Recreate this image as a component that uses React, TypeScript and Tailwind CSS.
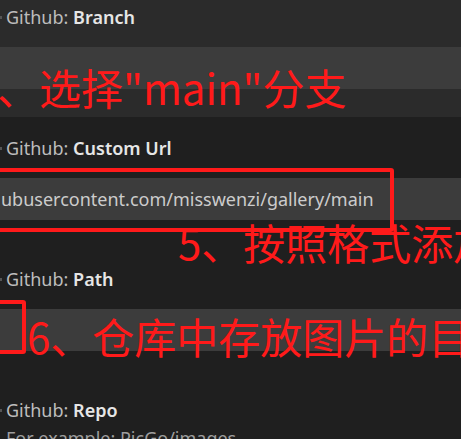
import React from "react";

function Label({ name }: { name: string }) {
  return (
    <div className="flex items-center h-[24px]">
      <div className="w-[2px] h-[3px] bg-[#555555]" />
      <div className="ml-[4px] text-[18px] leading-[24px] text-[#bdbdbd] whitespace-nowrap">
        Github: <span className="font-semibold text-[#e6e6e6]">{name}</span>
      </div>
    </div>
  );
}

function Row({ name, value, hovered }: { name: string; value?: string; hovered?: boolean }) {
  return (
    <div className={`h-[131px] pt-[19px] ${hovered ? "bg-[#2b2b2b]" : "bg-[#1f1f1f]"}`}>
      <Label name={name} />
      <div className="mt-[18px] h-[42px] bg-[#3c3c3c] flex items-center pl-[1px] text-[18px] text-[#cccccc] whitespace-nowrap">
        {value}
      </div>
    </div>
  );
}

export default function App() {
  return (
    <div className="relative w-[461px] h-[439px] overflow-hidden bg-[#1f1f1f] font-['Noto_Sans',sans-serif]">
      <div className="mt-[-14px]">
        <Row name="Branch" hovered />
        <Row name="Custom Url" value="ubusercontent.com/misswenzi/gallery/main" />
        <Row name="Path" />
        <div className="h-[131px] pt-[19px] bg-[#1f1f1f]">
          <Label name="Repo" />
          <div className="mt-[4px] pl-[6px] text-[18px] leading-[24px] text-[#9e9e9e] whitespace-nowrap">
            For example: PicGo/images
          </div>
        </div>
      </div>

      {/* annotations */}
      <div className="absolute left-[-12px] top-[168px] w-[406px] h-[64px] border-[4px] border-[#ff1a1a] rounded-[3px]" />
      <div className="absolute left-[-20px] top-[300px] w-[46px] h-[54px] border-[4px] border-[#ff1a1a] rounded-[3px]" />

      <div className="absolute left-[-3px] top-[66px] text-[42px] leading-none text-[#ff1a1a] whitespace-nowrap font-['Noto_Sans_CJK_SC',sans-serif]">
        、选择"main"分支
      </div>
      <div className="absolute left-[178px] top-[221px] text-[42px] leading-none text-[#ff1a1a] whitespace-nowrap font-['Noto_Sans_CJK_SC',sans-serif]">
        5、按照格式添加
      </div>
      <div className="absolute left-[27px] top-[315px] text-[42px] leading-none text-[#ff1a1a] whitespace-nowrap font-['Noto_Sans_CJK_SC',sans-serif]">
        6、仓库中存放图片的目录
      </div>
    </div>
  );
}
